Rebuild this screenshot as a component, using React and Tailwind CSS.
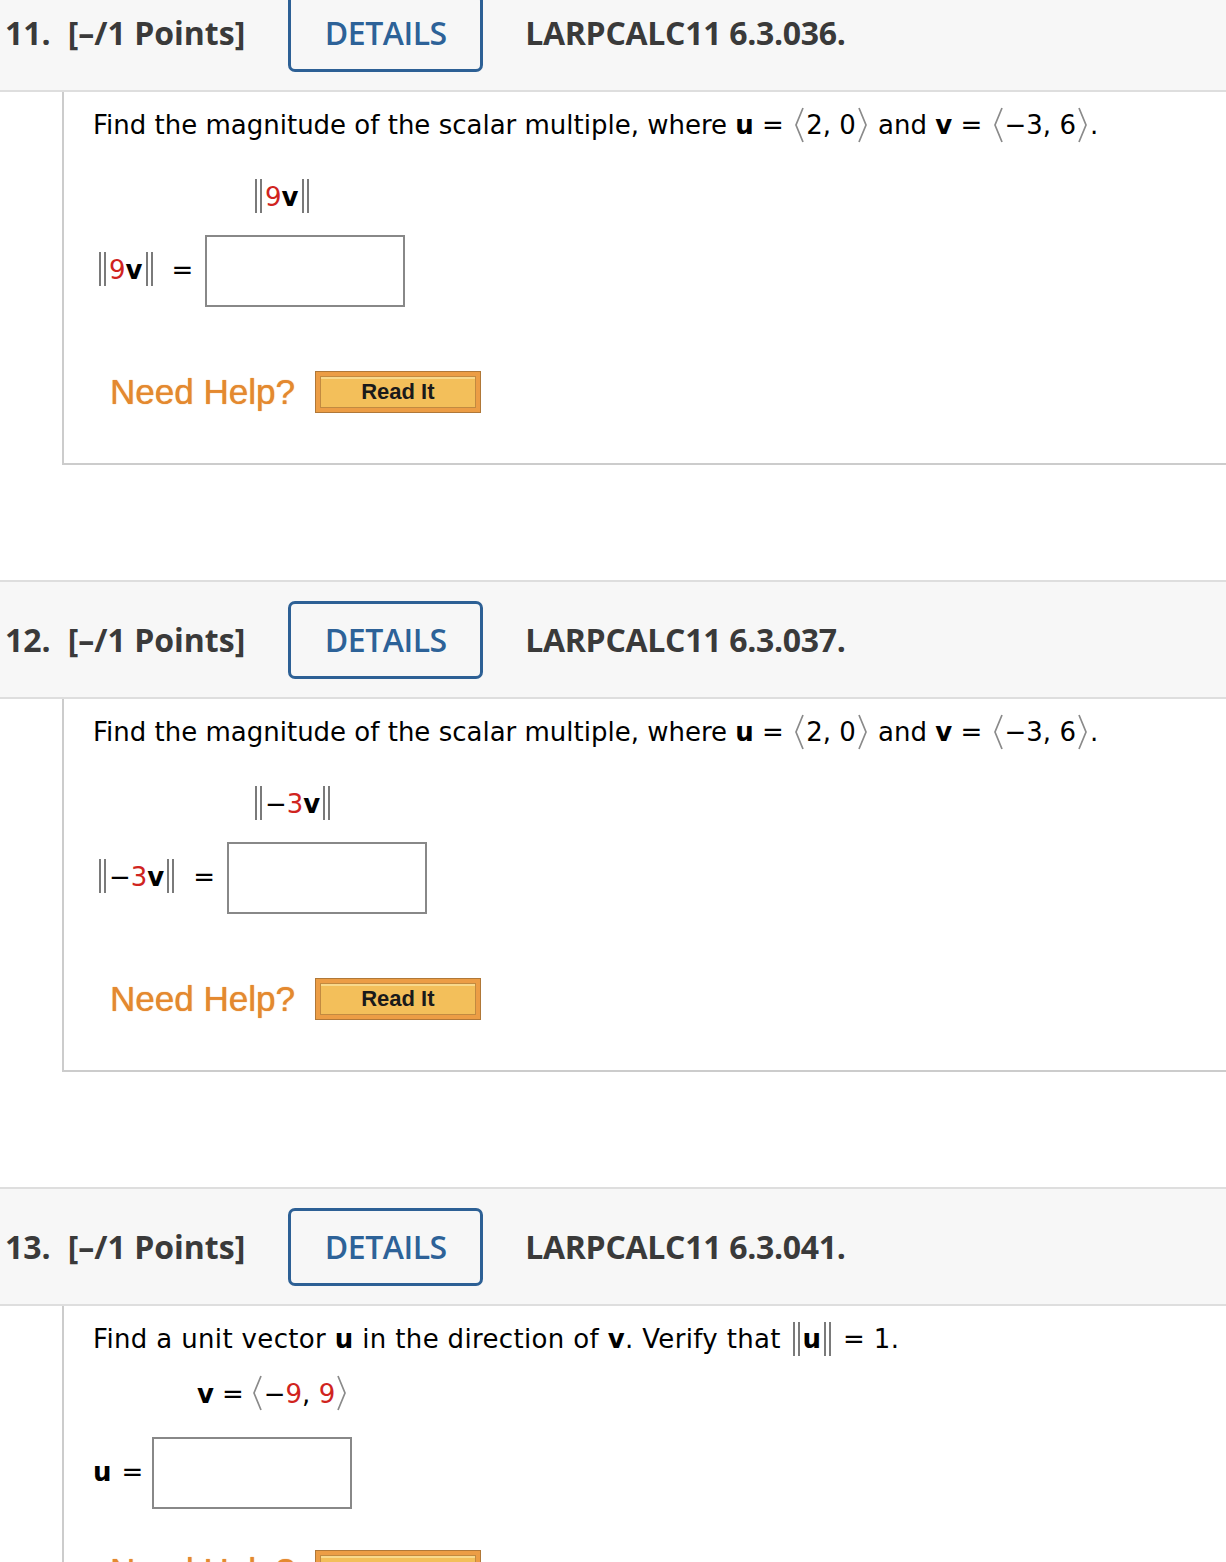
import React from "react";

const Bars = () => (
  <span className="inline-flex gap-[3px] h-[34px] align-middle mx-[3px] relative top-[-2px]">
    <span className="w-[2px] bg-[#7a7a7a]" />
    <span className="w-[2px] bg-[#7a7a7a]" />
  </span>
);

const LA = () => (
  <svg width="12" height="36" viewBox="0 0 12 36" className="inline-block align-middle relative top-[-2px] mx-[1px]">
    <polyline points="10,1 3,18 10,35" fill="none" stroke="#8a8a8a" strokeWidth="1.7" />
  </svg>
);
const RA = () => (
  <svg width="12" height="36" viewBox="0 0 12 36" className="inline-block align-middle relative top-[-2px] mx-[1px]">
    <polyline points="2,1 9,18 2,35" fill="none" stroke="#8a8a8a" strokeWidth="1.7" />
  </svg>
);

const Header = ({ num, code, first }) => (
  <div
    className={`flex items-center h-[119px] bg-[#f7f7f7] border-y-2 border-[#dedede] pl-[5px] text-[#3a3a3a] ${first ? "-mt-[27px]" : ""}`}
    style={{ fontFamily: '"Open Sans", sans-serif' }}
  >
    <span className="text-[32px] font-bold">{num}.</span>
    <span className="text-[32px] font-bold ml-[17px]">[–/1 Points]</span>
    <span className="ml-[43px] w-[195px] h-[78px] border-[3px] border-[#2d6095] rounded-[7px] flex items-center justify-center text-[32px] text-[#2d6298] font-semibold tracking-[-0.5px]">
      DETAILS
    </span>
    <span className="ml-[42px] text-[32px] font-bold tracking-[-0.3px]">LARPCALC11 {code}.</span>
  </div>
);

const Help = ({ mt }) => (
  <div className={`flex items-center ${mt} ml-[17px]`} style={{ fontFamily: '"Liberation Sans", Arial, sans-serif' }}>
    <span className="text-[35px] text-[#e4892f] leading-none [text-shadow:0_0_1px_#e4892f]">Need Help?</span>
    <span className="ml-[20px] w-[166px] h-[42px] border border-[#b07838] bg-[#ec9d45] p-[4px] flex">
      <span className="flex-1 border border-[#c28a40] bg-[#f3bf5a] flex items-center justify-center text-[22px] font-bold text-[#1a1a1a] shadow-[inset_0_2px_0_#f8d98c]">
        Read It
      </span>
    </span>
  </div>
);

const bodyFont = { fontFamily: '"DejaVu Sans", Verdana, sans-serif' };

const MagQ = ({ num, code, coef, first }) => (
  <div className="mb-[115px]">
    <Header num={num} code={code} first={first} />
    <div className="ml-[62px] h-[373px] border-l-2 border-b-2 border-[#cccccc] pl-[29px] pt-[15px] text-[26px] text-black" style={bodyFont}>
      <p className="leading-[36px] whitespace-nowrap">
        Find the magnitude of the scalar multiple, where <b>u</b> = <LA />2, 0<RA /> and <b>v</b> = <LA />−3, 6<RA />.
      </p>
      <div className="mt-[33px] ml-[159px] h-[40px] flex items-center">
        <Bars />
        {coef.neg && <span>−</span>}
        <span className="text-[#d0241e]">{coef.n}</span>
        <b>v</b>
        <Bars />
      </div>
      <div className="mt-[17px] flex items-center ml-[3px]">
        <Bars />
        {coef.neg && <span>−</span>}
        <span className="text-[#d0241e]">{coef.n}</span>
        <b>v</b>
        <Bars />
        <span className="ml-[16px]">=</span>
        <span className="ml-[12px] w-[200px] h-[72px] border-2 border-[#888] bg-white" />
      </div>
      <Help mt="mt-[64px]" />
    </div>
  </div>
);

export default function App() {
  return (
    <div className="w-[1226px] h-[1562px] overflow-hidden bg-white">
      <MagQ num="11" code="6.3.036" coef={{ neg: false, n: "9" }} first />
      <MagQ num="12" code="6.3.037" coef={{ neg: true, n: "3" }} />
      <div>
        <Header num="13" code="6.3.041" />
        <div className="ml-[62px] h-[400px] border-l-2 border-[#cccccc] pl-[29px] pt-[15px] text-[26px] text-black" style={bodyFont}>
          <p className="leading-[36px] whitespace-nowrap tracking-[0.35px]">
            Find a unit vector <b>u</b> in the direction of <b>v</b>. Verify that <Bars /><b>u</b><Bars /> = 1.
          </p>
          <div className="mt-[17px] ml-[104px] h-[40px] flex items-center">
            <b>v</b>
            <span className="ml-[8px] mr-[6px]">=</span>
            <LA />
            <span>−</span>
            <span className="text-[#d0241e]">9</span>
            <span>,&nbsp;</span>
            <span className="text-[#d0241e]">9</span>
            <RA />
          </div>
          <div className="mt-[22px] flex items-center">
            <b>u</b>
            <span className="ml-[10px]">=</span>
            <span className="ml-[9px] w-[200px] h-[72px] border-2 border-[#888] bg-white" />
          </div>
          <Help mt="mt-[41px]" />
        </div>
      </div>
    </div>
  );
}
